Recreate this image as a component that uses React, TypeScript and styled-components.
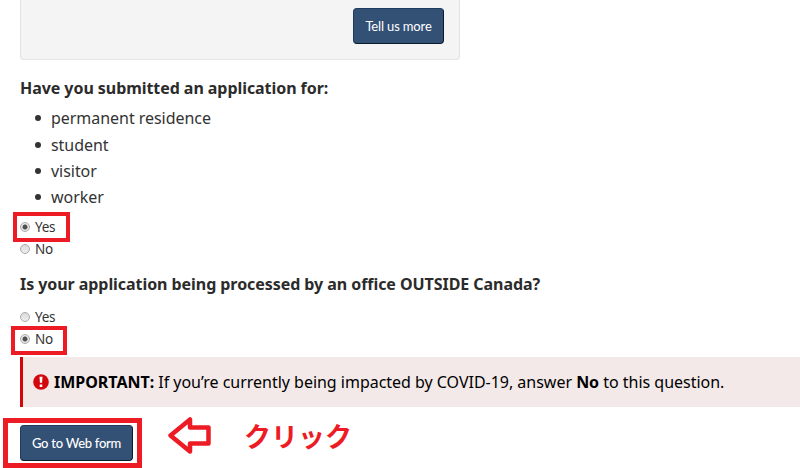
import React from "react";
import styled, { createGlobalStyle } from "styled-components";

const GlobalStyle = createGlobalStyle`
  *, *::before, *::after { box-sizing: border-box; }
  body { margin: 0; background: #fff; overflow: hidden; }
`;

const Page = styled.main`
  width: 800px;
  height: 468px;
  overflow: hidden;
  display: flex;
  flex-direction: column;
  padding-left: 20px;
  background: #fff;
  color: #333;
  font-family: "Noto Sans", "Noto Sans CJK JP", sans-serif;
`;

const Panel = styled.section`
  flex: none;
  width: 440px;
  height: 60px;
  display: flex;
  justify-content: flex-end;
  align-items: flex-start;
  padding: 8px 15px 0 0;
  background: #f4f4f4;
  border: 1px solid #e3e3e3;
  border-top: 0;
  border-radius: 0 0 4px 4px;
`;

const Button = styled.button<{ $width: number; $spacing?: number; $weight?: number }>`
  width: ${(p) => p.$width}px;
  height: 36px;
  padding: 0;
  border: 1px solid #1d3c5f;
  border-right-color: #091c2d;
  border-bottom-color: #091c2d;
  border-radius: 4px;
  background: #335075;
  color: #fff;
  font-family: "Lato", sans-serif;
  font-size: 13px;
  font-weight: ${(p) => p.$weight ?? 400};
  line-height: 34px;
  letter-spacing: ${(p) => p.$spacing ?? 0}px;
  white-space: nowrap;
`;

const Question = styled.h2<{ $top: number }>`
  flex: none;
  margin: ${(p) => p.$top}px 0 0;
  color: #2b2b2b;
  font-size: 16px;
  font-weight: 700;
  line-height: 24px;
  letter-spacing: -0.06px;
  white-space: nowrap;
`;

const List = styled.ul`
  flex: none;
  margin: 5px 0 0;
  padding: 0;
  list-style: none;
`;

const Item = styled.li`
  display: flex;
  align-items: center;
  height: 26px;
  padding-left: 15px;
  font-size: 16px;
  line-height: 26px;
  letter-spacing: -0.04px;

  &:first-child { margin-bottom: 1px; }

  &::before {
    content: "";
    width: 6px;
    height: 6px;
    margin-right: 10px;
    border-radius: 50%;
    background: #333;
  }
`;

const Options = styled.div<{ $top: number }>`
  flex: none;
  margin-top: ${(p) => p.$top}px;
`;

const Option = styled.label`
  position: relative;
  display: flex;
  align-items: center;
  width: 60px;
  height: 22px;
  font-size: 13.5px;
  letter-spacing: -0.3px;
  line-height: 22px;
`;

const Radio = styled.input`
  appearance: none;
  width: 10px;
  height: 10px;
  margin: 0 5px 1px 0;
  border: 1px solid #aaa;
  border-radius: 50%;
  background: linear-gradient(#dadada, #eee);

  &:checked {
    background: radial-gradient(circle, #505050 0 2px, #e8e8e8 3px);
  }
`;

const Highlight = styled.span<{ $x: number; $y: number; $w: number; $h: number; $line?: number }>`
  position: absolute;
  left: ${(p) => p.$x}px;
  top: ${(p) => p.$y}px;
  width: ${(p) => p.$w}px;
  height: ${(p) => p.$h}px;
  border: ${(p) => p.$line ?? 4}px solid #ed1c24;
  pointer-events: none;
`;

const Alert = styled.div`
  flex: none;
  display: flex;
  align-items: center;
  height: 50px;
  margin-top: 7px;
  padding-left: 10px;
  border-left: 3px solid #d3080c;
  background: #f3e9e8;
  color: #000;
  font-size: 16px;
  white-space: nowrap;

  svg { flex: none; margin-right: 5px; }
`;

const Message = styled.p`
  margin: 0;
  letter-spacing: -0.02px;
  strong { font-weight: 700; }
`;

const Footer = styled.div`
  flex: none;
  display: flex;
  align-items: flex-start;
  padding-top: 18px;
`;

const Target = styled.div`
  position: relative;
  height: 36px;
`;

const Arrow = styled.svg`
  margin: -9px 0 0 35px;
`;

const Caption = styled.span`
  margin: -9px 0 0 32px;
  color: #ed1c24;
  font: 700 27px/40px "Noto Sans CJK JP", sans-serif;
  white-space: nowrap;
`;

const topics = ["permanent residence", "student", "visitor", "worker"];

export default function App() {
  return (
    <>
      <GlobalStyle />
      <Page>
        <Panel>
          <Button $width={91} $spacing={-0.15}>Tell us more</Button>
        </Panel>
        <Question $top={16}>Have you submitted an application for:</Question>
        <List>
          {topics.map((topic) => <Item key={topic}>{topic}</Item>)}
        </List>
        <Options $top={6}>
          <Option>
            <Radio type="radio" name="submitted" defaultChecked />Yes
            <Highlight $x={-7} $y={-4} $w={57} $h={30} />
          </Option>
          <Option><Radio type="radio" name="submitted" />No</Option>
        </Options>
        <Question $top={12}>Is your application being processed by an office OUTSIDE Canada?</Question>
        <Options $top={10}>
          <Option><Radio type="radio" name="outside" />Yes</Option>
          <Option>
            <Radio type="radio" name="outside" defaultChecked />No
            <Highlight $x={-9} $y={-2} $w={56} $h={29} />
          </Option>
        </Options>
        <Alert>
          <svg width="16" height="16" viewBox="0 0 16 16" aria-hidden="true">
            <circle cx="8" cy="8" r="7.8" fill="#d3080c" />
            <path d="M6.5 2.8h3l-.4 6H6.9zM6.7 10.4h2.6v2.5H6.7z" fill="#fff" />
          </svg>
          <Message>
            <strong>IMPORTANT:</strong> If you’re currently being impacted by COVID-19, answer <strong>No</strong> to this question.
          </Message>
        </Alert>
        <Footer>
          <Target>
            <Button $width={113} $spacing={-0.27} $weight={500}>Go to Web form</Button>
            <Highlight $x={-17} $y={-7} $w={139} $h={50} $line={5} />
          </Target>
          <Arrow width="44" height="40" viewBox="0 0 44 40" aria-hidden="true">
            <path d="M2.5 19.5 22 3.5v8h18.5v16H22v8Z" fill="none" stroke="#ed1c24" strokeWidth="4.5" strokeLinejoin="round" />
          </Arrow>
          <Caption lang="ja">クリック</Caption>
        </Footer>
      </Page>
    </>
  );
}
